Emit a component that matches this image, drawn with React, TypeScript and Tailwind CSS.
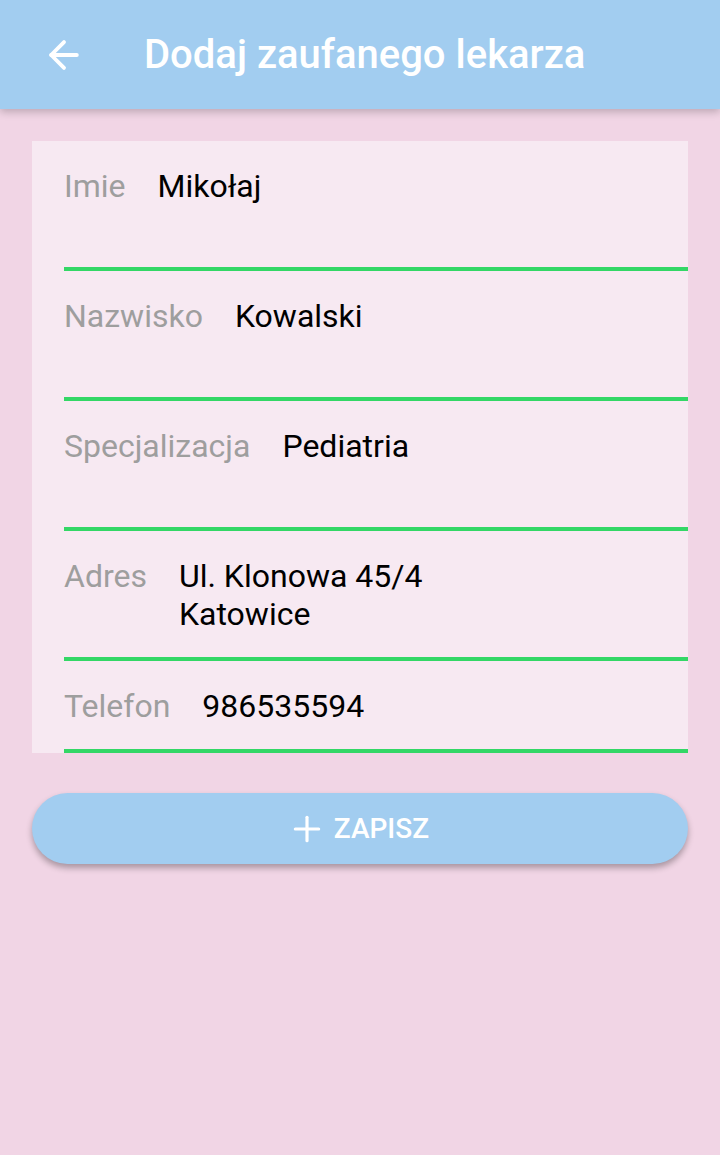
import { ArrowLeft, Plus } from 'lucide-react';

type Field = {
  label: string;
  lines: string[];
  rows: number;
};

const fields: Field[] = [
  { label: 'Imie', lines: ['Mikołaj'], rows: 2 },
  { label: 'Nazwisko', lines: ['Kowalski'], rows: 2 },
  { label: 'Specjalizacja', lines: ['Pediatria'], rows: 2 },
  { label: 'Adres', lines: ['Ul. Klonowa 45/4', 'Katowice'], rows: 2 },
  { label: 'Telefon', lines: ['986535594'], rows: 1 },
];

function FormRow({ field }: { field: Field }) {
  return (
    <div className="ml-8 flex items-start border-b-4 border-[#33d766] pt-[26px] pb-[24px]">
      <span className="text-[32px] leading-[38px] text-[#9e9e9e]">{field.label}</span>
      <div className={field.rows === 2 ? 'ml-[32px] min-h-[76px]' : 'ml-[32px] min-h-[38px]'}>
        {field.lines.map((line) => (
          <div key={line} className="text-[32px] leading-[38px] text-black">
            {line}
          </div>
        ))}
      </div>
    </div>
  );
}

export default function App() {
  return (
    <div className="flex min-h-[1155px] flex-col bg-[#f1d5e5] font-['Roboto',sans-serif]">
      {/* app bar */}
      <header className="relative z-10 flex h-[109px] items-center bg-[#a2cdf0] shadow-[0_3px_8px_rgba(0,0,0,0.22)]">
        <div className="ml-10 flex h-12 w-12 items-center justify-center text-white">
          <ArrowLeft size={44} strokeWidth={2.1} />
        </div>
        <h1 className="ml-[56px] text-[40px] leading-none font-medium text-white">Dodaj zaufanego lekarza</h1>
      </header>

      <main className="flex flex-col px-8 pt-8">
        {/* formularz */}
        <div className="bg-[#f7e9f2]">
          {fields.map((f) => (
            <FormRow key={f.label} field={f} />
          ))}
        </div>

        <button className="mt-10 flex h-[71px] items-center justify-center gap-[7px] rounded-full bg-[#a2cdf0] pr-[4px] text-white shadow-[0_4px_6px_rgba(0,0,0,0.3)]">
          <Plus size={40} strokeWidth={1.9} />
          <span className="text-[28px] leading-none font-medium">ZAPISZ</span>
        </button>
      </main>
    </div>
  );
}
